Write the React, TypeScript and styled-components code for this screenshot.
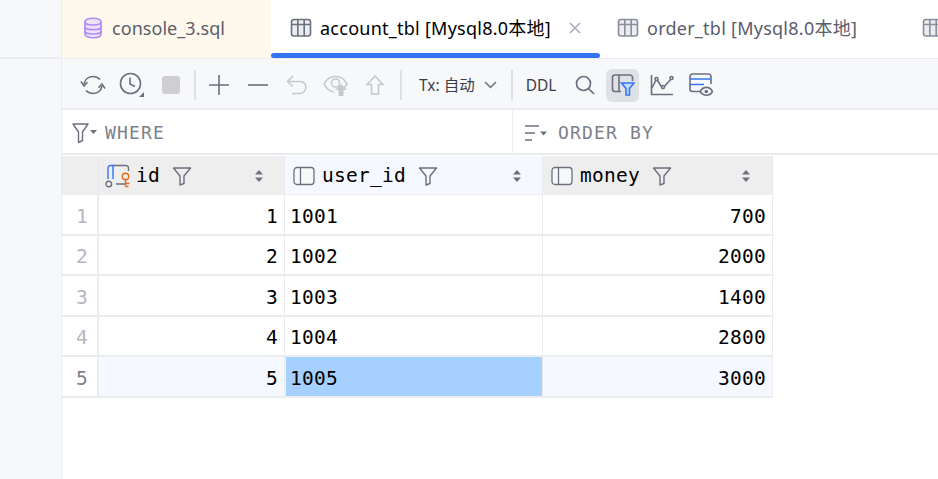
import React from 'react';
import styled, { createGlobalStyle } from 'styled-components';

const Global = createGlobalStyle`
  html, body { margin: 0; padding: 0; background: #fff; overflow: hidden; }
  #root { width: 938px; height: 479px; }
`;

const Page = styled.div`
  display: flex; width: 938px; height: 479px; overflow: hidden; background: #fff;
`;
const Sidebar = styled.aside`
  width: 61px; flex: none; background: #f7f8fa; border-right: 1px solid #ebecf0;
  display: flex; flex-direction: column;
`;
const SidebarTop = styled.div`
  height: 57px; flex: none; border-bottom: 2px solid #ebecf0; margin-right: 1px;
`;
const Main = styled.main`
  flex: 1; min-width: 0; display: flex; flex-direction: column;
`;
const TabBar = styled.div`
  height: 59px; flex: none; display: flex; border-bottom: 1px solid #ebecf0; box-sizing: border-box;
  overflow: hidden;
`;
const Tab = styled.div<{ $w: number; $active?: boolean; $warm?: boolean; $pad: number; $ls?: number }>`
  position: relative; width: ${p => p.$w}px; flex: none; box-sizing: border-box;
  padding: 0 0 3px ${p => p.$pad}px; display: flex; align-items: center; gap: 8px;
  background: ${p => (p.$warm ? '#fff8ed' : '#fff')};
  font: 18px/24px "Noto Sans", "Noto Sans CJK SC", sans-serif;
  letter-spacing: ${p => p.$ls ?? 0.25}px; white-space: nowrap;
  color: ${p => (p.$active ? '#000' : '#5a5d6b')};
`;
const Underline = styled.span`
  position: absolute; left: 0; right: 0; bottom: 0; height: 5px; background: #3574f0; border-radius: 3px;
`;
const Close = styled.span`
  display: flex; margin-left: 9px;
`;
const Toolbar = styled.div`
  flex: none; height: 46px; background: #f7f8fa;
  display: flex; align-items: center; padding: 3px 0 0 11px; border-bottom: 2px solid #ebecf0;
  box-sizing: content-box;
`;
const IconSlot = styled.div<{ $w?: number; $on?: boolean; $l?: number }>`
  width: ${p => p.$w ?? 39}px; height: 33px; flex: none; display: flex; align-items: center; justify-content: center;
  margin-left: ${p => p.$l ?? 0}px; border-radius: 6px; background: ${p => (p.$on ? '#dfe1e5' : 'transparent')};
`;
const Sep = styled.div<{ $l: number; $r?: number }>`
  width: 2px; height: 30px; background: #dfe1e5; flex: none;
  margin: 0 ${p => p.$r ?? 0}px 0 ${p => p.$l}px;
`;
const ToolText = styled.span<{ $ml: number; $gap?: number }>`
  font: 15.5px/20px "Noto Sans", "Noto Sans CJK SC", sans-serif; color: #3b3e49; white-space: nowrap;
  margin-left: ${p => p.$ml}px; display: flex; align-items: center; gap: ${p => p.$gap ?? 0}px;
`;
const FilterRow = styled.div`
  height: 43px; flex: none; display: flex; border-bottom: 2px solid #ebecf0;
`;
const FilterCell = styled.div<{ $w?: number; $pad: number; $gap: number }>`
  ${p => (p.$w ? `width: ${p.$w}px; flex: none; border-right: 1px solid #ebecf0;` : 'flex: 1;')}
  box-sizing: border-box; display: flex; align-items: center; padding: 3px 0 0 ${p => p.$pad}px; gap: ${p => p.$gap}px;
  font: 18px/24px "DejaVu Sans Mono", monospace; color: #7d7f8a; letter-spacing: 1.15px;
`;
const Grid = styled.div`
  display: grid; grid-template-columns: 37px 186px 258px 230px; width: 711px;
  grid-auto-rows: auto; margin-top: 1px;
`;
const Head = styled.div<{ $tint?: boolean; $pad?: number }>`
  height: 39px; box-sizing: border-box; display: flex; align-items: center; padding: 1px 0 0 ${p => p.$pad ?? 8}px;
  background: ${p => (p.$tint ? '#f5f8fe' : '#eeeeef')};
  border-right: 1px solid ${p => (p.$tint ? '#ebecf0' : '#e8e9ed')};
  border-bottom: 1px solid #ebecf0;
`;
const HeadName = styled.span<{ $l?: number }>`
  font: 19.5px/24px "DejaVu Sans Mono", monospace; letter-spacing: 0.26px; color: #000;
  margin: 0 12px 0 ${p => p.$l ?? 7}px;
`;
const SortSlot = styled.span<{ $r: number }>`
  margin-left: auto; margin-right: ${p => p.$r}px; display: flex;
`;
const Num = styled.div<{ $h: number; $sel?: boolean }>`
  height: ${p => p.$h}px; box-sizing: border-box; display: flex; align-items: center; padding: 4px 0 0 14px;
  font: 19.5px/24px "DejaVu Sans Mono", monospace; color: ${p => (p.$sel ? '#7f828c' : '#b4b6bf')};
  border-right: 2px solid #ebecf0; border-bottom: 2px solid #ebecf0;
  background: #fff;
`;
const Cell = styled.div<{ $h: number; $right?: boolean; $tint?: boolean; $picked?: boolean }>`
  height: ${p => p.$h}px; box-sizing: border-box; display: flex; align-items: center;
  justify-content: ${p => (p.$right ? 'flex-end' : 'flex-start')};
  padding: 4px 6px 0 ${p => (p.$picked ? 4 : 5)}px;
  background: ${p => (p.$picked ? '#a5d0ff' : p.$tint ? '#f5f8fe' : '#fff')};
  font: 19.5px/24px "DejaVu Sans Mono", monospace; letter-spacing: 0.26px; color: #000;
  border-right: 1px solid #ebecf0; border-bottom: 2px solid #ebecf0;
  ${p => (p.$picked ? 'border-left: 1px solid #f0f1f5;' : '')}
`;

const Stroke = '#6c707e';
const Faint = '#c6c8d0';

const Db = () => (
  <svg width="22" height="22" viewBox="0 0 22 22" fill="#ece3fa" stroke="#b38bf5" strokeWidth="1.7">
    <path d="M3 5c0-5 16-5 16 0v12c0 5-16 5-16 0z" />
    <path d="M3 5c0 4 16 4 16 0M3 9.700c0 4 16 4 16 0M3 14c0 4 16 4 16 0" fill="none" />
  </svg>
);
const TableIcon = ({ c = Stroke }: { c?: string }) => (
  <svg width="22" height="22" viewBox="0 0 22 22" fill="none" stroke={c} strokeWidth="1.6">
    <rect x="1.500" y="2.500" width="19" height="16.500" rx="2.500" fill="#ebecf0" />
    <path d="M1.500 7.500h19M7.800 2.500V7.500M14.200 2.500V7.500M7.800 7.500V19M14.200 7.500V19" />
  </svg>
);
const X = () => (
  <svg width="14" height="14" viewBox="0 0 14 14" stroke="#a8adbd" strokeWidth="1.5"><path d="M2 2l10 10M12 2L2 12" /></svg>
);
const Refresh = () => (
  <svg width="26" height="24" viewBox="0 0 26 24" fill="none" stroke={Stroke} strokeWidth="1.6">
    <path d="M4 11c1-5 5-7.500 9-7.500 3 0 5 1 7 3" />
    <path d="M22 13c-1 5-5 7.500-9 7.500-3 0-5-1-7-3" />
    <path d="M1 8.500 4 13l3.500-3.800M25 15.500 22 11l-3.500 3.800" />
  </svg>
);
const Clock = () => (
  <svg width="26" height="26" viewBox="0 0 26 26" fill="none" stroke={Stroke} strokeWidth="1.6">
    <circle cx="11.500" cy="11.500" r="10" />
    <path d="M11 5.500V12l5 2.500" />
    <path d="M25 20v5h-5z" fill="#6c707e" stroke="none" />
  </svg>
);
const Stop = () => (
  <svg width="18" height="18" viewBox="0 0 18 18"><rect width="18" height="18" rx="3" fill="#cfcfd1" /></svg>
);
const Plus = () => (
  <svg width="20" height="20" viewBox="0 0 20 20" stroke={Stroke} strokeWidth="1.6"><path d="M0 10h20M10 0v20" /></svg>
);
const Minus = () => (
  <svg width="20" height="20" viewBox="0 0 20 20" stroke={Stroke} strokeWidth="1.6"><path d="M0 10h20" /></svg>
);
const Undo = () => (
  <svg width="22" height="22" viewBox="0 0 22 22" fill="none" stroke={Faint} strokeWidth="1.6">
    <path d="M7 2 1.500 7.500 7 12.500M1.500 7.500H14c8 0 8 12-1 12H6" />
  </svg>
);
const EyeUp = () => (
  <svg width="26" height="24" viewBox="0 0 26 24" fill="none" stroke={Faint} strokeWidth="1.6">
    <path d="M1 11c5-10 18-10 23 0-1 1.500-2 3-3.500 4M1 11c2.500 5 6 7.500 10 8" />
    <circle cx="12.500" cy="10" r="4" />
    <path d="M12 17l6-6 6 6h-3.500v6h-5v-6z" fill="#c6c8d0" stroke="none" />
  </svg>
);
const ArrowUp = () => (
  <svg width="20" height="22" viewBox="0 0 20 22" fill="none" stroke={Faint} strokeWidth="1.6">
    <path d="M10 2 2 10.500h4.500V20h7v-9.500H18z" />
  </svg>
);
const Chevron = () => (
  <svg width="13" height="8" viewBox="0 0 13 8" fill="none" stroke={Stroke} strokeWidth="1.5"><path d="M1 1l5.500 5.500L12 1" /></svg>
);
const Search = () => (
  <svg width="20" height="20" viewBox="0 0 20 20" fill="none" stroke={Stroke} strokeWidth="1.7">
    <circle cx="8.500" cy="8.500" r="7" /><path d="M13.500 13.500 19 19" />
  </svg>
);
const FilterToggle = () => (
  <svg width="24" height="24" viewBox="0 0 24 24" fill="none" strokeWidth="1.6">
    <path d="M10 18.500H4a2.500 2.500 0 0 1-2.500-2.500V4.500A2.500 2.500 0 0 1 4 2h15a2.500 2.500 0 0 1 2.500 2.500V8M8 2v16.500" stroke={Stroke} />
    <path d="M10.500 10h12.500l-4.500 5.500V22h-3.500v-6.500z" stroke="#3574f0" fill="#c5d8fb" />
  </svg>
);
const Chart = () => (
  <svg width="24" height="22" viewBox="0 0 24 22" fill="none" stroke={Stroke} strokeWidth="1.6">
    <path d="M1.500 1v19.500H23" />
    <path d="M2 14 6.500 5l6 9.500L22 4" />
    <circle cx="6.500" cy="5" r="1.500" fill="#fff" /><circle cx="13" cy="13" r="1.500" fill="#fff" /><circle cx="21.500" cy="4" r="1.500" fill="#fff" />
  </svg>
);
const Card = () => (
  <svg width="24" height="24" viewBox="0 0 24 24" fill="none" strokeWidth="1.6">
    <path d="M11 18.500H3.500A2.500 2.500 0 0 1 1 16V3.500A2.500 2.500 0 0 1 3.500 1h16A2.500 2.500 0 0 1 22 3.500V11" stroke={Stroke} />
    <path d="M1 6h21M1 11.500h14" stroke="#3574f0" />
    <path d="M11 18.500c3.500-5.500 9.500-5.500 12.500 0-3 5-9 5-12.500 0z" stroke={Stroke} fill="#f7f8fa" />
    <circle cx="17.300" cy="18.500" r="1.800" fill="#6c707e" />
  </svg>
);
const Funnel = ({ s = 20 }: { s?: number }) => (
  <svg width={s} height={s} viewBox="0 0 20 20" fill="none" stroke={Stroke} strokeWidth="1.4">
    <path d="M1.500 2h17l-6.500 8v7.500L8 19v-9z" strokeLinejoin="round" />
  </svg>
);
const FunnelDrop = () => (
  <svg width="26" height="22" viewBox="0 0 26 22" fill="none" stroke={Stroke} strokeWidth="1.4">
    <path d="M1 2h15l-5.500 8v8.500L6.500 20.500v-10.500z" strokeLinejoin="round" />
    <path d="M18 8h7l-3.500 4z" fill="#6c707e" stroke="none" />
  </svg>
);
const SortDrop = () => (
  <svg width="24" height="18" viewBox="0 0 24 18" fill="none" stroke={Stroke} strokeWidth="1.4">
    <path d="M1 2h14M1 9h10M1 16h7" />
    <path d="M16 7.500h7l-3.500 4z" fill="#6c707e" stroke="none" />
  </svg>
);
const Sort = () => (
  <svg width="8" height="12" viewBox="0 0 8 12" fill="#6c707e"><path d="M4 0l4 4.500H0zM4 12l4-4.500H0z" /></svg>
);
const ColIcon = () => (
  <svg width="22" height="20" viewBox="0 0 22 20" fill="none" stroke={Stroke} strokeWidth="1.3">
    <rect x="1" y="1.500" width="20" height="17" rx="3" fill="#f7f8fa" /><path d="M7.500 1.500v17" />
  </svg>
);
const KeyCol = () => (
  <svg width="26" height="24" viewBox="0 0 26 24" fill="none" strokeWidth="1.4">
    <path d="M3 15V4a2.500 2.500 0 0 1 2.500-2.500h2.500V15" stroke="#3574f0" />
    <path d="M8 1.500h13A2.500 2.500 0 0 1 23.500 4v3M11 20h9" stroke={Stroke} />
    <circle cx="3.800" cy="20" r="2.800" stroke={Stroke} />
    <circle cx="20.500" cy="12.500" r="3.200" stroke="#e66d17" />
    <path d="M20.500 16v6.500M20.500 19.500h4M20.500 22.500h3" stroke="#e66d17" />
  </svg>
);

const rows = [
  { n: 1, u: '1001', m: '700', h: 41 },
  { n: 2, u: '1002', m: '2000', h: 40 },
  { n: 3, u: '1003', m: '1400', h: 41 },
  { n: 4, u: '1004', m: '2800', h: 40 },
  { n: 5, u: '1005', m: '3000', h: 41 },
];

export default function App() {
  return (
    <Page>
      <Global />
      <Sidebar><SidebarTop /></Sidebar>
      <Main>
        <TabBar>
          <Tab $w={209} $warm $pad={20} $ls={0.05}><Db />console_3.sql</Tab>
          <Tab $w={329} $active $pad={19}>
            <TableIcon />account_tbl [Mysql8.0本地]<Close><X /></Close><Underline />
          </Tab>
          <Tab $w={306} $pad={17}><TableIcon c="#8b8e9a" />order_tbl [Mysql8.0本地]</Tab>
          <Tab $w={80} $pad={16}><TableIcon c="#8b8e9a" /></Tab>
        </TabBar>
        <Toolbar>
          <IconSlot><Refresh /></IconSlot>
          <IconSlot><Clock /></IconSlot>
          <IconSlot><Stop /></IconSlot>
          <Sep $l={4} $r={3.5} />
          <IconSlot><Plus /></IconSlot>
          <IconSlot><Minus /></IconSlot>
          <IconSlot><Undo /></IconSlot>
          <IconSlot><EyeUp /></IconSlot>
          <IconSlot><ArrowUp /></IconSlot>
          <Sep $l={5.5} />
          <ToolText $ml={17} $gap={9}>Tx: 自动<Chevron /></ToolText>
          <Sep $l={14} />
          <ToolText $ml={13}>DDL</ToolText>
          <IconSlot $l={9}><Search /></IconSlot>
          <IconSlot $w={33} $on $l={2}><FilterToggle /></IconSlot>
          <IconSlot $l={3.5}><Chart /></IconSlot>
          <IconSlot><Card /></IconSlot>
        </Toolbar>
        <FilterRow>
          <FilterCell $w={451} $pad={10} $gap={7}><FunnelDrop />WHERE</FilterCell>
          <FilterCell $pad={11} $gap={10}><SortDrop />ORDER BY</FilterCell>
        </FilterRow>
        <Grid>
          <Head />
          <Head $pad={6}><KeyCol /><HeadName $l={5}>id</HeadName><Funnel /><SortSlot $r={21}><Sort /></SortSlot></Head>
          <Head $tint $pad={8}><ColIcon /><HeadName>user_id</HeadName><Funnel /><SortSlot $r={21}><Sort /></SortSlot></Head>
          <Head $pad={8}><ColIcon /><HeadName>money</HeadName><Funnel /><SortSlot $r={22}><Sort /></SortSlot></Head>
          {rows.map(r => {
            const sel = r.n === 5;
            return (
              <React.Fragment key={r.n}>
                <Num $h={r.h} $sel={sel}>{r.n}</Num>
                <Cell $h={r.h} $right $tint={sel}>{r.n}</Cell>
                <Cell $h={r.h} $picked={sel}>{r.u}</Cell>
                <Cell $h={r.h} $right $tint={sel}>{r.m}</Cell>
              </React.Fragment>
            );
          })}
        </Grid>
      </Main>
    </Page>
  );
}
